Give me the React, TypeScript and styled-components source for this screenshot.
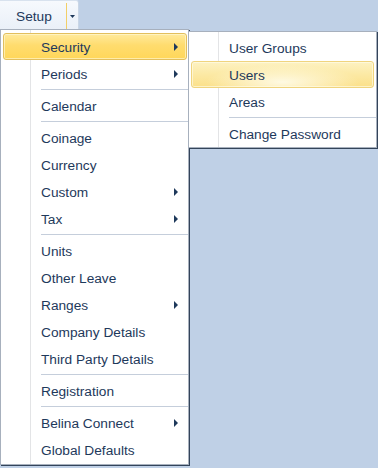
import React from "react";
import styled, { createGlobalStyle, css } from "styled-components";

const GlobalStyle = createGlobalStyle`
  html, body { margin: 0; padding: 0; }
  body {
    background: #bfd0e6;
    font-family: "Liberation Sans", Arial, sans-serif;
  }
`;

const Page = styled.div`
  width: 378px;
  height: 468px;
  background: #bfd0e6;
  overflow: hidden;
`;

const Toolbar = styled.div`
  height: 29px;
  display: flex;
  align-items: stretch;
`;

const SplitButton = styled.div`
  width: 79px;
  display: flex;
  background: linear-gradient(#f6f9fd, #eaf0f8);
  border-top: 1px solid #d8e2ee;
  border-right: 1px solid #c9d6e6;
  border-top-right-radius: 3px;
  box-sizing: border-box;
`;

const ButtonLabel = styled.div`
  width: 67px;
  display: flex;
  align-items: center;
  padding: 1px 0 0 16px;
  box-sizing: border-box;
  font-size: 13.7px;
  color: #1e395b;
  border-right: 1px solid #f2cf68;
  margin: 2px 0 0 0;
`;

const DropPart = styled.div`
  flex: 1;
  display: flex;
  align-items: center;
  justify-content: center;
  padding-top: 2px;
`;

const MenuRow = styled.div`
  display: flex;
  align-items: flex-start;
`;

const Menu = styled.div<{ $sub?: boolean }>`
  box-sizing: border-box;
  width: 189px;
  border: 1px solid #a7b0bd;
  box-shadow: 1px 1px 0 #33445a;
  background: linear-gradient(
    to right,
    #ffffff 0,
    #ffffff 29px,
    #e3e4e6 29px,
    #e3e4e6 30px,
    #ffffff 30px
  );
  padding: ${(p) => (p.$sub ? "2px 0 0" : "3px 0 1px")};
  ${(p) =>
    p.$sub &&
    css`
      margin-top: 2px;
      margin-left: -1px;
    `}
`;

const Item = styled.div<{ $active?: "main" | "sub"; $sub?: boolean }>`
  height: 27px;
  box-sizing: border-box;
  display: flex;
  align-items: center;
  justify-content: space-between;
  border: 1px solid transparent;
  border-radius: 3px;
  margin: ${(p) => (p.$sub ? "0 2px 0 2px" : "0 1px 0 2px")};
  padding: ${(p) => (p.$sub ? "1px 8px 0 37px" : "1px 8px 0 37px")};
  font-size: 13.7px;
  color: #1e395b;
  white-space: nowrap;
  ${(p) =>
    p.$active === "main" &&
    css`
      background: linear-gradient(#ffea9c 0%, #ffdc6e 45%, #ffd75a 100%);
      border-color: #e2bf5e;
      box-shadow: inset 0 0 0 1px rgba(255, 250, 220, 0.6);
    `}
  ${(p) =>
    p.$active === "sub" &&
    css`
      background: radial-gradient(
          ellipse at 50% 80%,
          rgba(255, 252, 235, 0.9) 0%,
          rgba(255, 252, 235, 0) 60%
        ),
        linear-gradient(#fdf2c2 0%, #fce9a4 50%, #fbe08a 100%);
      border-color: #f0d47e;
      box-shadow: inset 0 0 0 1px rgba(255, 253, 238, 0.6);
    `}
`;

const ItemArrow = styled.span`
  display: flex;
  margin-top: -1px;
`;

const Separator = styled.div`
  height: 1px;
  margin: 2px 0 2px 40px;
  background: #c5cedb;
`;

const Arrow = () => (
  <ItemArrow>
    <svg width="4" height="8" viewBox="0 0 4 8">
      <path d="M0 0 L4 4 L0 8 Z" fill="#1e395b" />
    </svg>
  </ItemArrow>
);

const DownArrow = () => (
  <svg width="5" height="3" viewBox="0 0 5 3">
    <path d="M0 0 H5 L2.5 3 Z" fill="#1e395b" />
  </svg>
);

type Entry = { label: string; sub?: boolean; active?: boolean } | "sep";

const mainEntries: Entry[] = [
  { label: "Security", sub: true, active: true },
  { label: "Periods", sub: true },
  "sep",
  { label: "Calendar" },
  "sep",
  { label: "Coinage" },
  { label: "Currency" },
  { label: "Custom", sub: true },
  { label: "Tax", sub: true },
  "sep",
  { label: "Units" },
  { label: "Other Leave" },
  { label: "Ranges", sub: true },
  { label: "Company Details" },
  { label: "Third Party Details" },
  "sep",
  { label: "Registration" },
  "sep",
  { label: "Belina Connect", sub: true },
  { label: "Global Defaults" },
];

const subEntries: Entry[] = [
  { label: "User Groups" },
  { label: "Users", active: true },
  { label: "Areas" },
  "sep",
  { label: "Change Password" },
];

export default function App() {
  return (
    <Page>
      <GlobalStyle />
      <Toolbar>
        <SplitButton>
          <ButtonLabel>Setup</ButtonLabel>
          <DropPart>
            <DownArrow />
          </DropPart>
        </SplitButton>
      </Toolbar>
      <MenuRow>
        <Menu>
          {mainEntries.map((e, i) =>
            e === "sep" ? (
              <Separator key={i} />
            ) : (
              <Item key={i} $active={e.active ? "main" : undefined}>
                <span>{e.label}</span>
                {e.sub && <Arrow />}
              </Item>
            )
          )}
        </Menu>
        <Menu $sub>
          {subEntries.map((e, i) =>
            e === "sep" ? (
              <Separator key={i} />
            ) : (
              <Item key={i} $sub $active={e.active ? "sub" : undefined}>
                <span>{e.label}</span>
              </Item>
            )
          )}
        </Menu>
      </MenuRow>
    </Page>
  );
}
